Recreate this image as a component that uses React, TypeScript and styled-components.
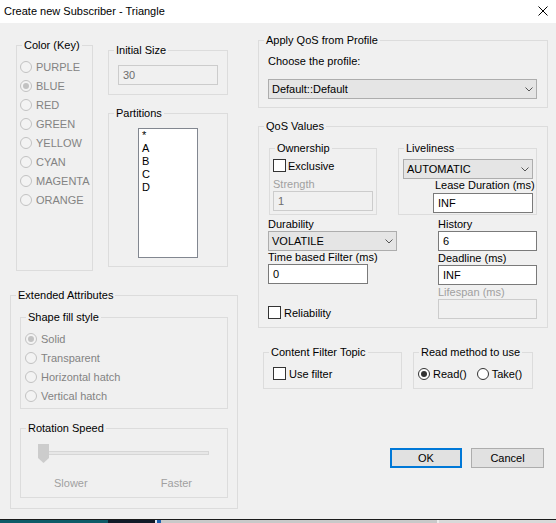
import React from "react";
import styled, { createGlobalStyle } from "styled-components";

const GlobalStyle = createGlobalStyle`
  *, *::before, *::after { box-sizing: border-box; }
  body {
    margin: 0;
    background: #f0f0f0;
    font-family: "Liberation Sans", Arial, sans-serif;
    font-size: 11px;
    color: #000;
  }
`;

const Window = styled.div`
  width: 556px;
  height: 523px;
  display: flex;
  flex-direction: column;
  background: #f0f0f0;
  overflow: hidden;
`;

const TitleBar = styled.div`
  height: 23px;
  flex-shrink: 0;
  background: #fff;
  display: flex;
  align-items: center;
  justify-content: space-between;
  padding: 0 8px 2px 4px;
  font-size: 11px;
`;

const Body = styled.div`
  height: 496px;
  flex-shrink: 0;
  display: flex;
  padding-left: 10px;
`;

const Taskbar = styled.div`
  height: 4px;
  flex-shrink: 0;
  display: flex;
  border-top: 1px solid #1b1b1b;
`;

const TaskSegment = styled.div<{ $w?: number; $c: string }>`
  width: ${(p) => (p.$w ? `${p.$w}px` : "auto")};
  flex: ${(p) => (p.$w ? "none" : "1")};
  background: ${(p) => p.$c};
`;

const LeftColumn = styled.div`
  width: 228px;
  display: flex;
  flex-direction: column;
`;

const TopRow = styled.div`
  display: flex;
  align-items: flex-start;
  gap: 15px;
  margin-top: 22px;
  padding-left: 6px;
`;

const Stack = styled.div<{ $gap: number; $top?: number }>`
  display: flex;
  flex-direction: column;
  gap: ${(p) => p.$gap}px;
  margin-top: ${(p) => p.$top ?? 0}px;
`;

const RightColumn = styled.div`
  width: 290px;
  margin: 17px 0 0 20px;
  display: flex;
  flex-direction: column;
`;

const Frame = styled.div<{ $w: number; $h: number; $pad: string; $top?: number }>`
  position: relative;
  flex-shrink: 0;
  width: ${(p) => p.$w}px;
  height: ${(p) => p.$h}px;
  margin-top: ${(p) => p.$top ?? 0}px;
  padding: ${(p) => p.$pad};
  border: 1px solid #dcdcdc;
`;

const Caption = styled.span`
  position: absolute;
  top: -7px;
  left: 5px;
  padding: 0 2px;
  line-height: 13px;
  background: #f0f0f0;
  white-space: nowrap;
`;

const OptionRow = styled.div<{ $disabled?: boolean; $h?: number; $gap?: number }>`
  display: flex;
  align-items: center;
  gap: ${(p) => p.$gap ?? 4}px;
  height: ${(p) => p.$h ?? 19}px;
  white-space: nowrap;
  color: ${(p) => (p.$disabled ? "#838383" : "#000")};
`;

const RadioCircle = styled.span<{ $checked?: boolean; $disabled?: boolean }>`
  width: 12px;
  height: 12px;
  flex-shrink: 0;
  border-radius: 50%;
  border: 1px solid ${(p) => (p.$disabled ? "#c2c2c2" : "#333")};
  background: ${(p) => (p.$disabled ? "#f3f3f3" : "#fff")};
  display: flex;
  align-items: center;
  justify-content: center;
  &::after {
    content: "";
    display: ${(p) => (p.$checked ? "block" : "none")};
    width: 6px;
    height: 6px;
    border-radius: 50%;
    background: ${(p) => (p.$disabled ? "#c2c2c2" : "#333")};
  }
`;

const CheckSquare = styled.span`
  width: 13px;
  height: 13px;
  flex-shrink: 0;
  border: 1px solid #333;
  background: #fff;
`;

const FieldLabel = styled.div<{ $disabled?: boolean; $top?: number; $left?: number }>`
  height: 13px;
  line-height: 13px;
  white-space: nowrap;
  margin-top: ${(p) => p.$top ?? 0}px;
  margin-left: ${(p) => p.$left ?? 0}px;
  color: ${(p) => (p.$disabled ? "#a0a0a0" : "#000")};
`;

const TextBox = styled.div<{ $w: number; $disabled?: boolean; $top?: number }>`
  width: ${(p) => p.$w}px;
  height: 20px;
  flex-shrink: 0;
  margin-top: ${(p) => p.$top ?? 0}px;
  padding: 0 4px;
  display: flex;
  align-items: center;
  border: 1px solid ${(p) => (p.$disabled ? "#cccccc" : "#7a7a7a")};
  background: ${(p) => (p.$disabled ? "#f0f0f0" : "#fff")};
  color: ${(p) => (p.$disabled ? "#6d6d6d" : "#000")};
`;

const Combo = styled.div<{ $w: number; $top?: number }>`
  width: ${(p) => p.$w}px;
  height: 20px;
  flex-shrink: 0;
  margin-top: ${(p) => p.$top ?? 0}px;
  padding: 0 3px 0 3px;
  display: flex;
  align-items: center;
  justify-content: space-between;
  border: 1px solid #adadad;
  background: #e5e5e5;
`;

const ListBox = styled.div`
  width: 60px;
  height: 130px;
  padding: 0 3px;
  border: 1px solid #828790;
  background: #fff;
  line-height: 13px;
`;

const SliderArea = styled.div`
  position: relative;
  width: 171px;
  height: 19px;
  padding: 7px 0 0 5px;
`;

const Track = styled.div`
  height: 4px;
  border: 1px solid #d6d6d6;
  background: #e7e7e7;
`;

const Thumb = styled.svg`
  position: absolute;
  left: 0;
  top: 0;
`;

const TickLabels = styled.div`
  width: 154px;
  margin-top: 14px;
  padding-left: 16px;
  display: flex;
  justify-content: space-between;
  line-height: 13px;
  color: #a0a0a0;
`;

const Row = styled.div<{ $gap: number; $top?: number; $left?: number }>`
  display: flex;
  align-items: flex-start;
  gap: ${(p) => p.$gap}px;
  margin-top: ${(p) => p.$top ?? 0}px;
  margin-left: ${(p) => p.$left ?? 0}px;
`;

const SubColumn = styled.div<{ $w?: number; $gap?: number; $left?: number }>`
  width: ${(p) => (p.$w ? `${p.$w}px` : "auto")};
  display: flex;
  flex-direction: column;
  gap: ${(p) => p.$gap ?? 0}px;
  margin-left: ${(p) => p.$left ?? 0}px;
`;

const ButtonRow = styled.div`
  display: flex;
  justify-content: flex-end;
  gap: 9px;
  margin-top: 59px;
  padding-right: 4px;
`;

const Button = styled.div<{ $default?: boolean; $w: number }>`
  width: ${(p) => p.$w}px;
  height: 20px;
  display: flex;
  align-items: center;
  justify-content: center;
  background: #e1e1e1;
  border: ${(p) => (p.$default ? "2px solid #0078d7" : "1px solid #adadad")};
`;

function GroupBox(props: {
  title: string;
  w: number;
  h: number;
  pad: string;
  top?: number;
  children?: React.ReactNode;
}) {
  return (
    <Frame $w={props.w} $h={props.h} $pad={props.pad} $top={props.top}>
      <Caption>{props.title}</Caption>
      {props.children}
    </Frame>
  );
}

function Chevron() {
  return (
    <svg width="8" height="5" viewBox="0 0 8 5">
      <polyline points="0.5,0.5 4,4 7.5,0.5" fill="none" stroke="#555" strokeWidth="1" />
    </svg>
  );
}

function Radio(props: { label: string; checked?: boolean; disabled?: boolean; gap?: number; h?: number }) {
  return (
    <OptionRow $disabled={props.disabled} $gap={props.gap} $h={props.h}>
      <RadioCircle $checked={props.checked} $disabled={props.disabled} />
      {props.label}
    </OptionRow>
  );
}

function Check(props: { label: string; gap: number }) {
  return (
    <OptionRow $h={13} $gap={props.gap}>
      <CheckSquare />
      {props.label}
    </OptionRow>
  );
}

const colors = ["PURPLE", "BLUE", "RED", "GREEN", "YELLOW", "CYAN", "MAGENTA", "ORANGE"];
const fills = ["Solid", "Transparent", "Horizontal hatch", "Vertical hatch"];
const partitions = ["*", "A", "B", "C", "D"];

export default function App() {
  return (
    <Window>
      <GlobalStyle />
      <TitleBar>
        <span>Create new Subscriber - Triangle</span>
        <svg width="10" height="10" viewBox="0 0 10 10">
          <path d="M0.5 0.5 L9.5 9.5 M9.5 0.5 L0.5 9.5" stroke="#000" strokeWidth="1" />
        </svg>
      </TitleBar>

      <Body>
        <LeftColumn>
          <TopRow>
            <GroupBox title="Color (Key)" w={77} h={226} pad="11px 0 0 3px">
              {colors.map((c) => (
                <Radio key={c} label={c} disabled checked={c === "BLUE"} />
              ))}
            </GroupBox>
            <Stack $gap={18} $top={5}>
              <GroupBox title="Initial Size" w={120} h={45} pad="14px 0 0 9px">
                <TextBox $w={100} $disabled>30</TextBox>
              </GroupBox>
              <GroupBox title="Partitions" w={120} h={154} pad="14px 0 0 29px">
                <ListBox>
                  {partitions.map((p) => (
                    <div key={p}>{p}</div>
                  ))}
                </ListBox>
              </GroupBox>
            </Stack>
          </TopRow>

          <GroupBox title="Extended Attributes" w={228} h={214} pad="21px 0 0 9px" top={24}>
            <GroupBox title="Shape fill style" w={208} h={92} pad="11px 0 0 4px">
              {fills.map((f) => (
                <Radio key={f} label={f} disabled checked={f === "Solid"} />
              ))}
            </GroupBox>
            <GroupBox title="Rotation Speed" w={208} h={70} pad="15px 0 0 17px" top={19}>
              <SliderArea>
                <Track />
                <Thumb width="11" height="19" viewBox="0 0 11 19">
                  <polygon points="0,0 11,0 11,14 5.5,19 0,14" fill="#cccccc" />
                </Thumb>
              </SliderArea>
              <TickLabels>
                <span>Slower</span>
                <span>Faster</span>
              </TickLabels>
            </GroupBox>
          </GroupBox>
        </LeftColumn>

        <RightColumn>
          <GroupBox title="Apply QoS from Profile" w={290} h={68} pad="14px 0 0 9px">
            <FieldLabel>Choose the profile:</FieldLabel>
            <Combo $w={269} $top={11}>
              <span>Default::Default</span>
              <Chevron />
            </Combo>
          </GroupBox>

          <GroupBox title="QoS Values" w={290} h={202} pad="21px 0 0 9px" top={18}>
            <Row $gap={21} $left={1}>
              <GroupBox title="Ownership" w={108} h={67} pad="10px 0 0 3px">
                <Check label="Exclusive" gap={2} />
                <FieldLabel $disabled $top={6}>Strength</FieldLabel>
                <TextBox $w={100} $disabled>1</TextBox>
              </GroupBox>
              <GroupBox title="Liveliness" w={139} h={67} pad="10px 0 0 4px">
                <Combo $w={130}>
                  <span>AUTOMATIC</span>
                  <Chevron />
                </Combo>
                <SubColumn $left={30}>
                  <FieldLabel $left={2}>Lease Duration (ms)</FieldLabel>
                  <TextBox $w={100} $top={1}>INF</TextBox>
                </SubColumn>
              </GroupBox>
            </Row>
            <Row $gap={0} $top={3}>
              <SubColumn $w={170}>
                <FieldLabel>Durability</FieldLabel>
                <Combo $w={129}>
                  <span>VOLATILE</span>
                  <Chevron />
                </Combo>
                <FieldLabel>Time based Filter (ms)</FieldLabel>
                <TextBox $w={100}>0</TextBox>
                <Row $gap={0} $top={22}>
                  <Check label="Reliability" gap={3} />
                </Row>
              </SubColumn>
              <SubColumn $gap={1}>
                <SubColumn>
                  <FieldLabel>History</FieldLabel>
                  <TextBox $w={99}>6</TextBox>
                </SubColumn>
                <SubColumn>
                  <FieldLabel>Deadline (ms)</FieldLabel>
                  <TextBox $w={99}>INF</TextBox>
                </SubColumn>
                <SubColumn>
                  <FieldLabel $disabled>Lifespan (ms)</FieldLabel>
                  <TextBox $w={99} $disabled />
                </SubColumn>
              </SubColumn>
            </Row>
          </GroupBox>

          <Row $gap={11} $top={24} $left={5}>
            <GroupBox title="Content Filter Topic" w={139} h={37} pad="14px 0 0 9px">
              <Check label="Use filter" gap={3} />
            </GroupBox>
            <GroupBox title="Read method to use" w={120} h={37} pad="14px 0 0 4px">
              <Row $gap={10}>
                <Radio label="Read()" checked gap={3} h={13} />
                <Radio label="Take()" gap={3} h={13} />
              </Row>
            </GroupBox>
          </Row>

          <ButtonRow>
            <Button $default $w={72}>OK</Button>
            <Button $w={73}>Cancel</Button>
          </ButtonRow>
        </RightColumn>
      </Body>

      <Taskbar>
        <TaskSegment $w={108} $c="#0d5a67" />
        <TaskSegment $w={47} $c="#101a28" />
        <TaskSegment $w={2} $c="#dfe6ee" />
        <TaskSegment $w={4} $c="#1c5fae" />
        <TaskSegment $w={276} $c="#c9c9c9" />
        <TaskSegment $w={2} $c="#ececec" />
        <TaskSegment $c="#d9d9d9" />
      </Taskbar>
    </Window>
  );
}
